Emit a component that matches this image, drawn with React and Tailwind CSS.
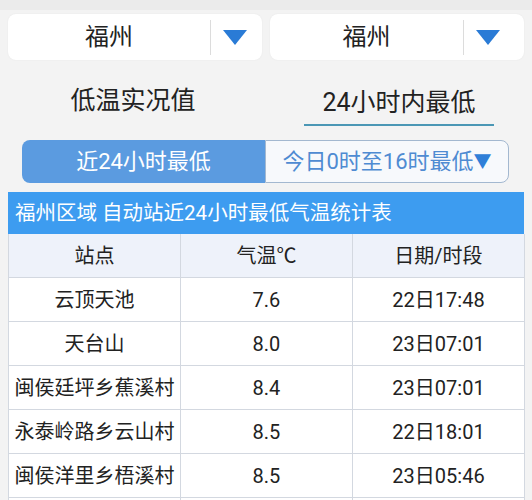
import React from "react";

const font = { fontFamily: 'Roboto, "Noto Sans CJK SC", sans-serif' };

function Tri() {
  return (
    <svg width="24" height="15" viewBox="0 0 24 15">
      <polygon points="0,0 24,0 12,15" fill="#2a7bd6" />
    </svg>
  );
}

function Dropdown({ arrowW }) {
  return (
    <div className="flex h-[46px] w-[254px] items-center rounded-lg bg-white shadow-[0_0_2px_rgba(0,0,0,0.06)]">
      <div className="flex flex-1 items-center justify-center text-[24px] text-[#222]">福州</div>
      <div className="h-[35px] w-px bg-[#dcdcdc]" />
      <div className={`flex h-full items-center pl-3 ${arrowW}`}>
        <Tri />
      </div>
    </div>
  );
}

const rows = [
  ["云顶天池", "7.6", "22日17:48"],
  ["天台山", "8.0", "23日07:01"],
  ["闽侯廷坪乡蕉溪村", "8.4", "23日07:01"],
  ["永泰岭路乡云山村", "8.5", "22日18:01"],
  ["闽侯洋里乡梧溪村", "8.5", "23日05:46"],
  ["", "", ""],
];

export default function App() {
  return (
    <div className="h-[500px] w-[532px] overflow-hidden bg-[#f3f3f3]" style={font}>
      <div className="h-[10px] bg-[#ebebeb]" />
      <div className="flex gap-2 px-2 pt-1">
        <Dropdown arrowW="w-[51px]" />
        <Dropdown arrowW="w-[60px]" />
      </div>
      <div className="flex h-[80px]">
        <div className="flex w-[266px] items-center justify-center pt-[2px] text-[25px] text-[#222]">
          低温实况值
        </div>
        <div className="flex w-[266px] items-center justify-center">
          <div className="mt-[10px] border-b-2 border-[#4b97b5] px-[18px] pb-[3px] text-[25px] text-[#222]">
            24小时内最低
          </div>
        </div>
      </div>
      <div className="ml-[22px] flex h-[43px] w-[487px]">
        <div className="flex w-[243px] items-center justify-center rounded-l-lg bg-[#5b9be0] text-[22px] text-white">
          近24小时最低
        </div>
        <div className="flex flex-1 items-center justify-center rounded-r-lg border border-[#a3b8d0] bg-[#f7f9fc] text-[22px] text-[#4f8bd2]">
          今日0时至16时最低<span className="text-[18px] text-[#2f7fd8]">▼</span>
        </div>
      </div>
      <div className="ml-2 mt-[9px] w-[516px] bg-white">
        <div className="flex h-[42px] items-center bg-[#3d9cf0] pl-[7px] text-[20.5px] text-white">
          福州区域 自动站近24小时最低气温统计表
        </div>
        <div className="grid grid-cols-[172px_172px_172px] border-l border-[#d3d8e0] text-[20px] text-[#222]">
          {["站点", "气温℃", "日期/时段"].map((h) => (
            <div
              key={h}
              className="flex h-[44px] items-center justify-center border-b border-r border-[#d3d8e0] bg-[#eef2fa]"
            >
              {h}
            </div>
          ))}
          {rows.map((r, i) =>
            r.map((c, j) => (
              <div
                key={i + "-" + j}
                className="flex h-[44px] items-center justify-center whitespace-nowrap border-b border-r border-[#d3d8e0]"
              >
                {c}
              </div>
            ))
          )}
        </div>
      </div>
    </div>
  );
}
